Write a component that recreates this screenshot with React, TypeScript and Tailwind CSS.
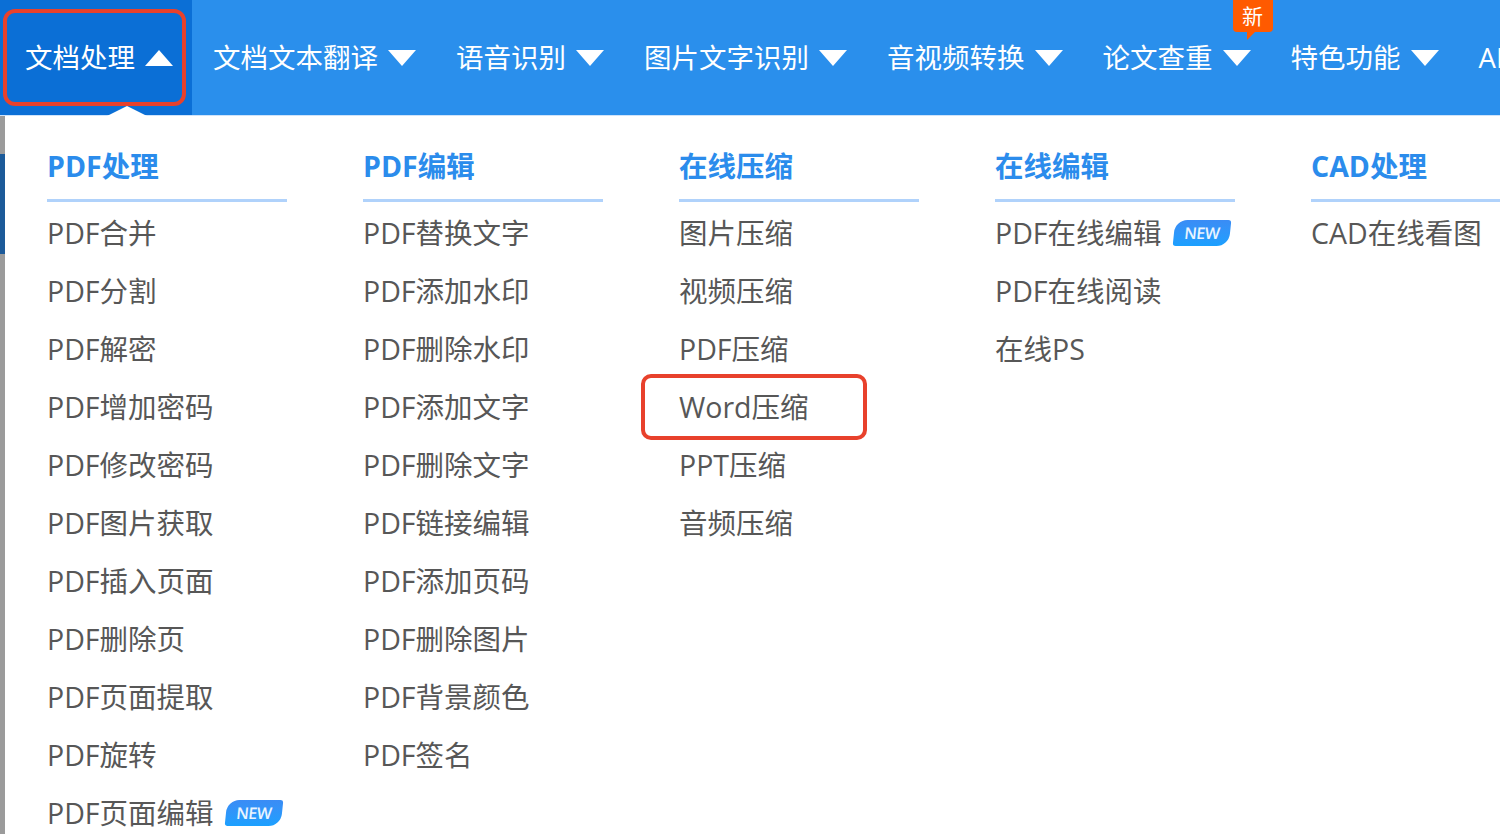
import React from 'react';

const FONT = { fontFamily: '"Open Sans", "Noto Sans CJK SC", sans-serif' };

const NAV = ['文档处理', '文档文本翻译', '语音识别', '图片文字识别', '音视频转换', '论文查重', '特色功能', 'API接口'];

const COLUMNS: { title: string; items: { label: string; isNew?: boolean; marked?: boolean }[] }[] = [
  {
    title: 'PDF处理',
    items: [
      { label: 'PDF合并' }, { label: 'PDF分割' }, { label: 'PDF解密' }, { label: 'PDF增加密码' },
      { label: 'PDF修改密码' }, { label: 'PDF图片获取' }, { label: 'PDF插入页面' }, { label: 'PDF删除页' },
      { label: 'PDF页面提取' }, { label: 'PDF旋转' }, { label: 'PDF页面编辑', isNew: true },
    ],
  },
  {
    title: 'PDF编辑',
    items: [
      { label: 'PDF替换文字' }, { label: 'PDF添加水印' }, { label: 'PDF删除水印' }, { label: 'PDF添加文字' },
      { label: 'PDF删除文字' }, { label: 'PDF链接编辑' }, { label: 'PDF添加页码' }, { label: 'PDF删除图片' },
      { label: 'PDF背景颜色' }, { label: 'PDF签名' },
    ],
  },
  {
    title: '在线压缩',
    items: [
      { label: '图片压缩' }, { label: '视频压缩' }, { label: 'PDF压缩' }, { label: 'Word压缩', marked: true },
      { label: 'PPT压缩' }, { label: '音频压缩' },
    ],
  },
  {
    title: '在线编辑',
    items: [{ label: 'PDF在线编辑', isNew: true }, { label: 'PDF在线阅读' }, { label: '在线PS' }],
  },
  {
    title: 'CAD处理',
    items: [{ label: 'CAD在线看图' }],
  },
];

const Caret = ({ up }: { up?: boolean }) => (
  <svg width="28" height="16" viewBox="0 0 28 16" className="shrink-0">
    {up ? <path d="M14 0 L28 16 L0 16 Z" fill="#fff" /> : <path d="M0 0 L28 0 L14 16 Z" fill="#fff" />}
  </svg>
);

const NewBadge = () => (
  <span className="ml-[12px] inline-flex h-[26px] w-[56px] -skew-x-6 items-center justify-center rounded-tl-[12px] rounded-br-[12px] rounded-tr-[3px] rounded-bl-[3px] bg-gradient-to-b from-[#3a8cf5] to-[#1aa0ff] text-[16px] font-semibold tracking-tight text-white/90">
    NEW
  </span>
);

export default function App() {
  return (
    <div className="relative h-[834px] w-[1500px] overflow-hidden bg-white" style={FONT}>
      {/* top nav */}
      <div className="flex h-[116px] items-stretch whitespace-nowrap border-b border-[#cfe3fa] bg-[#2a8fec] text-[27.5px] text-white">
        {NAV.map((label, i) => (
          <div
            key={label}
            className={`relative flex shrink-0 items-center gap-[10px] pr-[19px] ${
              i === 0 ? 'bg-[#0b6fd6] pl-[25px]' : 'pl-[21px]'
            }`}
          >
            <span className="leading-none">{label}</span>
            {i < NAV.length - 1 && <Caret up={i === 0} />}
            {i === 0 && (
              <>
                <span className="absolute bottom-[-1px] left-[107px] h-0 w-0 border-x-[20px] border-b-[10px] border-x-transparent border-b-white" />
                <span className="absolute left-[3px] top-[9px] h-[97px] w-[183px] rounded-[12px] border-[4px] border-[#e8412c]" />
              </>
            )}
            {label === '论文查重' && (
              <span className="absolute left-[151px] top-0 flex h-[32px] w-[40px] items-center justify-center rounded-b-[4px] bg-[#ff5a00] text-[21px] leading-none text-white">
                新
                <span className="absolute bottom-[-8px] left-[14px] h-0 w-0 border-r-[8px] border-t-[8px] border-r-transparent border-t-[#ff5a00]" />
              </span>
            )}
          </div>
        ))}
      </div>

      {/* dropdown body */}
      <div className="flex h-[718px]">
        <div className="flex w-[5px] shrink-0 flex-col bg-[#9b9b9b]">
          <div className="mt-[38px] h-[100px] bg-[#1c5a99]" />
        </div>
        <div className="grid shrink-0 grid-cols-[316px_316px_316px_316px_316px] pl-[42px] pt-[32px]">
          {COLUMNS.map((col, ci) => (
            <div key={col.title} className="flex flex-col">
              <div className="h-[36px] text-[28.5px] font-bold leading-[36px] text-[#2b8cec]">{col.title}</div>
              <div className={`mb-[2px] mt-[15px] h-[3px] bg-[#b0d2fb] ${ci === 4 ? 'w-[300px]' : 'w-[240px]'}`} />
              {col.items.map((it) => (
                <div key={it.label} className="relative flex h-[58px] items-center text-[28.5px] text-[#575757]">
                  <span className="leading-none">{it.label}</span>
                  {it.isNew && <NewBadge />}
                  {it.marked && (
                    <span className="absolute left-[-38px] top-[-4px] h-[66px] w-[226px] rounded-[10px] border-[4px] border-[#e8412c]" />
                  )}
                </div>
              ))}
            </div>
          ))}
        </div>
      </div>
    </div>
  );
}
